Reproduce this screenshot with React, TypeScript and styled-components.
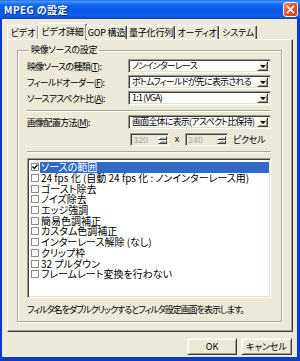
import React from "react";
import styled, { createGlobalStyle } from "styled-components";

const GlobalStyle = createGlobalStyle`
  html, body {
    margin: 0;
    padding: 0;
    background: #ffffff;
  }
  body {
    font-family: "Noto Sans CJK JP", "Liberation Sans", sans-serif;
    font-feature-settings: "palt";
    font-size: 9px;
    line-height: 11px;
    color: #000;
  }
`;

const tabs = [
  { label: "ビデオ", w: 32 },
  { label: "ビデオ詳細", w: 49, active: true },
  { label: "GOP 構造", w: 41 },
  { label: "量子化行列", w: 48 },
  { label: "オーディオ", w: 44 },
  { label: "システム", w: 38 },
];

const filters = [
  { label: "ソースの範囲", checked: true, selected: true },
  { label: "24 fps 化 (自動 24 fps 化 : ノンインターレース用)" },
  { label: "ゴースト除去" },
  { label: "ノイズ除去" },
  { label: "エッジ強調" },
  { label: "簡易色調補正" },
  { label: "カスタム色調補正" },
  { label: "インターレース解除 (なし)" },
  { label: "クリップ枠" },
  { label: "32 プルダウン" },
  { label: "フレームレート変換を行わない" },
];

const ComboBox = ({ value }: { value: string }) => (
  <Combo>
    <ComboText>{value}</ComboText>
    <DropButton>
      <Arrow />
    </DropButton>
  </Combo>
);

const SpinBox = ({ value, w }: { value: string; w: number }) => (
  <Spin $w={w}>
    <SpinText>{value}</SpinText>
    <SpinButtons>
      <SpinBtn>
        <SmallArrow $up />
      </SpinBtn>
      <SpinBtn>
        <SmallArrow />
      </SpinBtn>
    </SpinButtons>
  </Spin>
);

const App = () => {
  return (
    <>
      <GlobalStyle />
      <Window>
        <TitleBar>
          <Title>MPEG の設定</Title>
          <CloseButton>
            <svg width="9" height="9" viewBox="0 0 9 9">
              <path d="M1.5 1.5 L7.5 7.5 M7.5 1.5 L1.5 7.5" stroke="#fff" strokeWidth="1.7" strokeLinecap="square" />
            </svg>
          </CloseButton>
        </TitleBar>
        <Body>
          <TabStrip>
            {tabs.map((t) => (
              <Tab key={t.label} $w={t.w} $active={t.active}>
                {t.label}
              </Tab>
            ))}
          </TabStrip>
          <Panel>
            <Group>
              <Legend>映像ソースの設定</Legend>
              <Row>
                <Label>映像ソースの種類(<u>T</u>):</Label>
                <ComboBox value="ノンインターレース" />
              </Row>
              <Row>
                <Label>フィールドオーダー(<u>F</u>):</Label>
                <ComboBox value="ボトムフィールドが先に表示される" />
              </Row>
              <Row>
                <Label>ソースアスペクト比(<u>A</u>):</Label>
                <ComboBox value="1:1 (VGA)" />
              </Row>
              <Separator $mt={5} />
              <Row $mt={3}>
                <Label>画像配置方法(<u>M</u>):</Label>
                <ComboBox value="画面全体に表示(アスペクト比保持)" />
              </Row>
              <SizeRow>
                <SpinBox value="320" w={39} />
                <Times>x</Times>
                <SpinBox value="240" w={43} />
                <Unit>ピクセル</Unit>
              </SizeRow>
              <Separator $mt={5} />
              <ListBox>
                {filters.map((f) => (
                  <ListItem key={f.label}>
                    <Check>
                      {f.checked && (
                        <svg width="6" height="6" viewBox="0 0 6 6">
                          <path d="M0.5 2.5 L2.3 4.5 L5.5 0.8" stroke="#000" strokeWidth="1.3" fill="none" />
                        </svg>
                      )}
                    </Check>
                    <ItemText $selected={f.selected}>{f.label}</ItemText>
                  </ListItem>
                ))}
              </ListBox>
              <Hint>フィルタ名をダブルクリックするとフィルタ設定画面を表示します。</Hint>
            </Group>
          </Panel>
          <Footer>
            <Button $w={50}>OK</Button>
            <Button $w={51}>キャンセル</Button>
          </Footer>
        </Body>
      </Window>
    </>
  );
};

export default App;

const Window = styled.div`
  width: 300px;
  height: 361px;
  display: flex;
  flex-direction: column;
  background: #0a3ad0;
  box-sizing: border-box;
`;

const TitleBar = styled.div`
  height: 19px;
  flex: none;
  display: flex;
  align-items: center;
  justify-content: space-between;
  padding: 0 2px 0 4px;
  background: linear-gradient(
    180deg,
    #1a6cf0 0%,
    #4a94ff 8%,
    #2a7cf8 16%,
    #0f62e8 30%,
    #0a5ae4 60%,
    #0c62ee 80%,
    #0a52d8 92%,
    #0842b8 100%
  );
`;

const Title = styled.div`
  color: #ffffff;
  font-weight: bold;
  font-size: 10px;
  letter-spacing: 0.4px;
  text-shadow: 1px 1px 0 #0a2a8a;
`;

const CloseButton = styled.div`
  width: 13px;
  height: 13px;
  display: flex;
  align-items: center;
  justify-content: center;
  border: 1px solid #f4f4f4;
  border-radius: 3px;
  background: linear-gradient(135deg, #f08a68 0%, #e0552f 45%, #c8401c 100%);
`;

const Body = styled.div`
  flex: 1;
  margin: 0 3px 4px 2px;
  background: #ece9d8;
  display: flex;
  flex-direction: column;
  padding: 4px 4px 0 5px;
`;

const TabStrip = styled.div`
  height: 16px;
  flex: none;
  display: flex;
  align-items: flex-end;
  position: relative;
  z-index: 1;
`;

const Tab = styled.div<{ $w: number; $active?: boolean }>`
  width: ${(p) => p.$w}px;
  height: ${(p) => (p.$active ? 17 : 14)}px;
  margin-bottom: ${(p) => (p.$active ? -1 : 0)}px;
  margin-left: ${(p) => (p.$active ? -1 : 0)}px;
  margin-right: ${(p) => (p.$active ? -1 : 0)}px;
  box-sizing: border-box;
  background: #ece9d8;
  border-top: 1px solid #ffffff;
  border-left: 1px solid #ffffff;
  border-right: 1px solid #404040;
  box-shadow: inset -1px 0 0 #9d9a8c;
  border-radius: 2px 2px 0 0;
  display: flex;
  align-items: center;
  justify-content: center;
  white-space: nowrap;
  letter-spacing: -0.2px;
  padding-bottom: ${(p) => (p.$active ? 2 : 0)}px;
`;

const Panel = styled.div`
  flex: 1;
  box-sizing: border-box;
  border-top: 1px solid #ffffff;
  border-left: 1px solid #ffffff;
  border-right: 1px solid #404040;
  border-bottom: 1px solid #404040;
  box-shadow: inset -1px -1px 0 #9d9a8c;
  padding: 4px 10px 9px 9px;
  display: flex;
  flex-direction: column;
`;

const Group = styled.fieldset`
  flex: 1;
  margin: 0;
  padding: 1px 10px 0 9px;
  min-width: 0;
  border: 1px solid #aca899;
  box-shadow: inset 1px 1px 0 #ffffff, 1px 1px 0 #ffffff;
  display: flex;
  flex-direction: column;
`;

const Legend = styled.legend`
  padding: 0 2px;
  margin-left: 2px;
  line-height: 12px;
  letter-spacing: -0.3px;
`;

const Row = styled.div<{ $mt?: number }>`
  display: grid;
  grid-template-columns: 1fr 143px;
  align-items: center;
  height: 14px;
  margin-top: ${(p) => p.$mt ?? 2}px;
`;

const Label = styled.div`
  white-space: nowrap;
  line-height: 11px;
  letter-spacing: -0.7px;

  u {
    text-decoration: underline;
  }
`;

const sunken = `
  box-sizing: border-box;
  border-top: 1px solid #9d9a8c;
  border-left: 1px solid #9d9a8c;
  border-right: 1px solid #ffffff;
  border-bottom: 1px solid #ffffff;
  box-shadow: inset 1px 1px 0 #404040, inset -1px -1px 0 #e4e1d0;
`;

const raised = `
  box-sizing: border-box;
  background: #ece9d8;
  border-top: 1px solid #f4f3ee;
  border-left: 1px solid #f4f3ee;
  border-right: 1px solid #404040;
  border-bottom: 1px solid #404040;
  box-shadow: inset 1px 1px 0 #ffffff, inset -1px -1px 0 #9d9a8c;
`;

const Combo = styled.div`
  ${sunken}
  width: 143px;
  height: 14px;
  background: #ffffff;
  display: flex;
  align-items: center;
  padding: 2px 2px 2px 3px;
`;

const ComboText = styled.div`
  flex: 1;
  min-width: 0;
  white-space: nowrap;
  overflow: hidden;
  line-height: 10px;
  letter-spacing: -0.8px;
`;

const DropButton = styled.div`
  ${raised}
  width: 11px;
  height: 10px;
  flex: none;
  display: flex;
  align-items: center;
  justify-content: center;
`;

const Arrow = styled.div`
  width: 0;
  height: 0;
  border-left: 3px solid transparent;
  border-right: 3px solid transparent;
  border-top: 3px solid #000;
  margin-top: 1px;
`;

const Separator = styled.div<{ $mt: number }>`
  height: 0;
  flex: none;
  border-top: 1px solid #aca899;
  border-bottom: 1px solid #ffffff;
  margin-top: ${(p) => p.$mt}px;
`;

const SizeRow = styled.div`
  display: flex;
  align-items: center;
  height: 13px;
  margin-top: 4px;
  padding-left: 103px;
`;

const Spin = styled.div<{ $w: number }>`
  ${sunken}
  width: ${(p) => p.$w}px;
  height: 13px;
  background: #ece9d8;
  display: flex;
  align-items: stretch;
  padding: 2px 1px 2px 2px;
`;

const SpinText = styled.div`
  flex: 1;
  color: #aca899;
  line-height: 9px;
  font-family: "Liberation Sans", sans-serif;
  font-size: 9px;
`;

const SpinButtons = styled.div`
  width: 9px;
  display: flex;
  flex-direction: column;
`;

const SpinBtn = styled.div`
  ${raised}
  flex: 1;
  display: flex;
  align-items: center;
  justify-content: center;
`;

const SmallArrow = styled.div<{ $up?: boolean }>`
  width: 0;
  height: 0;
  border-left: 2px solid transparent;
  border-right: 2px solid transparent;
  ${(p) => (p.$up ? "border-bottom: 2px solid #aca899;" : "border-top: 2px solid #aca899;")}
`;

const Times = styled.div`
  width: 16px;
  text-align: center;
  font-family: "Liberation Sans", sans-serif;
  font-size: 9px;
`;

const Unit = styled.div`
  margin-left: 5px;
  white-space: nowrap;
  letter-spacing: -0.3px;
`;

const ListBox = styled.div`
  ${sunken}
  height: 140px;
  flex: none;
  margin-top: 5px;
  background: #ffffff;
  padding: 3px 1px 0 2px;
  display: flex;
  flex-direction: column;
`;

const ListItem = styled.div`
  height: 10.7px;
  flex: none;
  display: flex;
  align-items: center;
  font-size: 10px;
  line-height: 10px;
`;

const Check = styled.div`
  width: 8px;
  height: 8px;
  box-sizing: border-box;
  border: 1px solid #8a8a8a;
  background: #ffffff;
  margin-left: 1px;
  margin-right: 1px;
  display: flex;
  align-items: center;
  justify-content: center;
  flex: none;
`;

const ItemText = styled.div<{ $selected?: boolean }>`
  flex: 1;
  height: 100%;
  display: flex;
  align-items: center;
  padding-left: 1px;
  white-space: nowrap;
  background: ${(p) => (p.$selected ? "#316ac5" : "transparent")};
  color: ${(p) => (p.$selected ? "#ffffff" : "#000000")};
`;

const Hint = styled.div`
  margin-top: 6px;
  white-space: nowrap;
  line-height: 12px;
  letter-spacing: -1px;
`;

const Footer = styled.div`
  height: 25px;
  flex: none;
  box-sizing: border-box;
  padding: 6px 1px 2px 0;
  display: flex;
  justify-content: flex-end;
  gap: 4px;
`;

const Button = styled.div<{ $w: number }>`
  ${raised}
  width: ${(p) => p.$w}px;
  height: 17px;
  display: flex;
  align-items: center;
  justify-content: center;
`;
